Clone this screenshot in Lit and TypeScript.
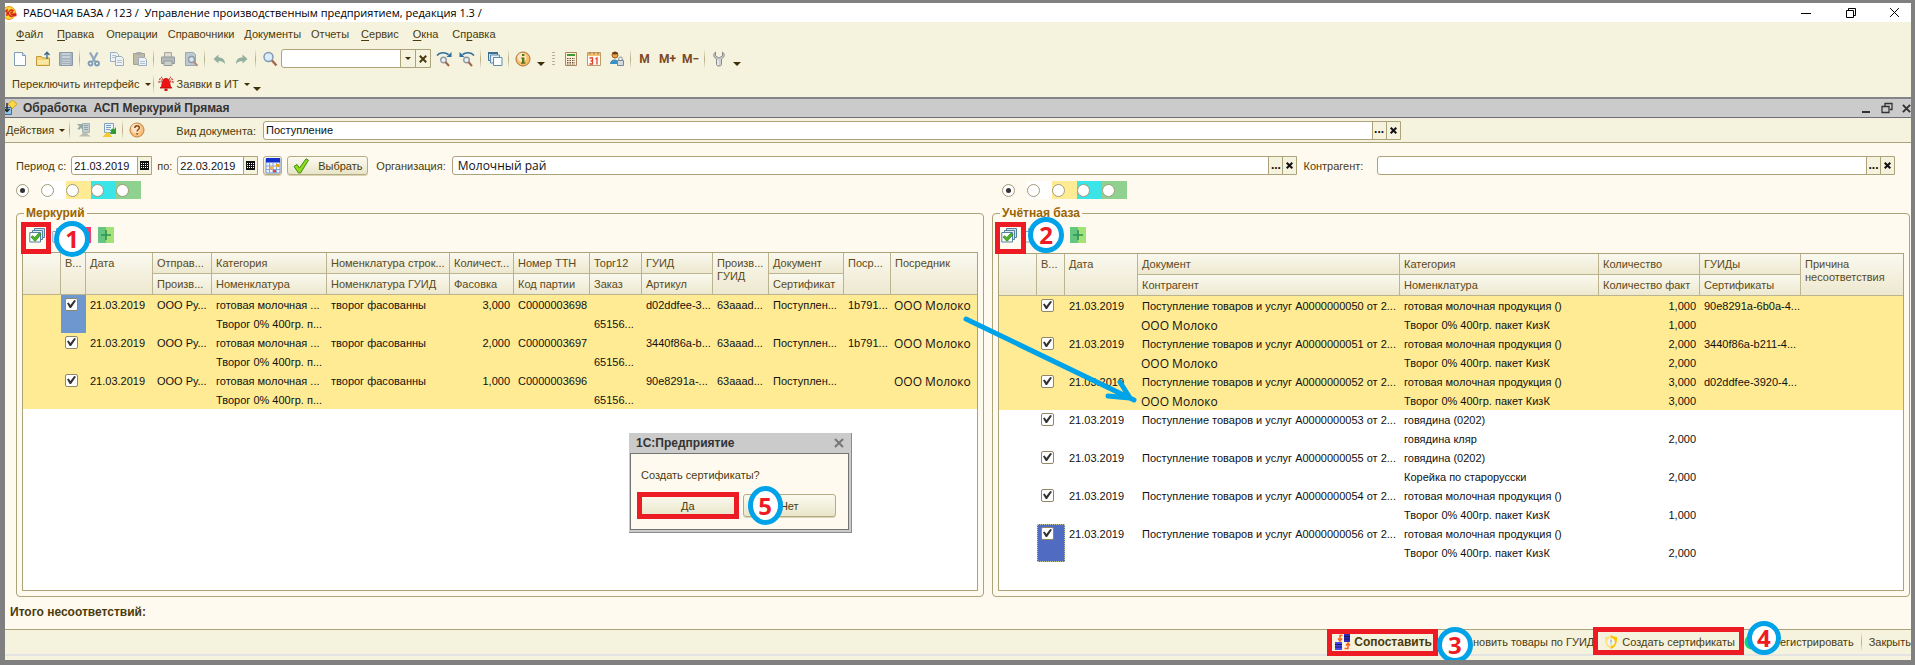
import { LitElement, html, svg, css, nothing } from "lit";
import { customElement, property } from "lit/decorators.js";
import { classMap } from "lit/directives/class-map.js";

const glyphs: Record<string, unknown> = {
  app: svg`<circle cx="8" cy="8" r="6.5" fill="#fbd23a" stroke="#e89a1c"/><path d="M4 6.500l2-1.500v6M12.500 6a3 3 0 1 0 0 4.500h3M12 7.500a1.200 1.200 0 1 0 0 1.500h3.500" fill="none" stroke="#d8231b" stroke-width="1.400"/>`,
  fresh: svg`<path d="M2.500 1.500h8l3 3v10h-11z" fill="#fbfdff" stroke="#7f9bb8"/><path d="M10.500 1.500v3h3" fill="#d5e3f1" stroke="#7f9bb8"/>`,
  open: svg`<path d="M1.500 5.500h5l1 1.500h7v7.500h-13z" fill="#f7d574" stroke="#c59a3a"/><path d="M2.500 9h11v4.500h-11z" fill="#fbe7a4"/><path d="M12 8V2M9.500 4L12 1.200 14.500 4" fill="none" stroke="#39688f" stroke-width="1.300"/>`,
  save: svg`<path d="M1.500 1.500h13v13h-13z" fill="#a9b6c2" stroke="#8c9aa7"/><path d="M4 2h8v5H4zM4 9h8v5H4z" fill="#c9d1d8"/><path d="M4 10.500h8M4 12.500h8M4 4.500h8" stroke="#a3afba"/>`,
  cut: svg`<path d="M4 1.500l5 9M11.500 1.500l-5 9" stroke="#8fa6bd" stroke-width="2.200"/><circle cx="4.500" cy="12.500" r="2" fill="none" stroke="#7e9ab5" stroke-width="1.800"/><circle cx="11" cy="12.500" r="2" fill="none" stroke="#7e9ab5" stroke-width="1.800"/>`,
  copy: svg`<path d="M1.500 1.500h6l2 2v7h-8z" fill="#eef2f4" stroke="#9aaec0"/><path d="M6.500 5.500h6l2 2v7h-8z" fill="#eef2f4" stroke="#9aaec0"/><path d="M3 4.500h4M3 6.500h3M8 9.500h5M8 11.500h5" stroke="#b2c1ce"/>`,
  paste: svg`<path d="M1.500 2.500h11v11h-11z" fill="#c0bba6" stroke="#a8a28c"/><path d="M4.500 1h5v3h-5z" fill="#a6adb1"/><path d="M6.500 6.500h6l2 2v6h-8z" fill="#eef2f4" stroke="#9aaec0"/><path d="M8 10.500h5M8 12.500h5" stroke="#b2c1ce"/>`,
  print: svg`<path d="M4.500 1.500h7v5h-7z" fill="#e0dcd2" stroke="#a7a69c"/><path d="M1.500 6h13v6.500h-13z" fill="#b4b8b8" stroke="#949a9b"/><path d="M4 10h8v4.500H4z" fill="#cbd0cd" stroke="#949a9b"/>`,
  preview: svg`<path d="M2.500 1.500h8l2 2v11h-10z" fill="#bec9d2" stroke="#9aa8b4"/><circle cx="8.500" cy="8.500" r="3" fill="#dce4ea" stroke="#8b9caa" stroke-width="1.400"/><path d="M10.800 11l3.700 3.700" stroke="#b58f78" stroke-width="2"/>`,
  undo: svg`<path d="M2.500 8l5-4.500v3c4 0 6.500 2 6.500 6.500-1.500-2-3.500-3-6.500-3v2.500z" fill="#93b09e"/>`,
  redo: svg`<path d="M13.500 8l-5-4.500v3c-4 0-6.500 2-6.500 6.500 1.500-2 3.500-3 6.500-3v2.500z" fill="#93b09e"/>`,
  find: svg`<circle cx="6.500" cy="6" r="4.500" fill="#d8ecfa" stroke="#7f98ae" stroke-width="1.400"/><path d="M10 9.500l4.500 5" stroke="#a4674b" stroke-width="2.400"/>`,
  next: svg`<path d="M1 4.500C4 1 9 1 12.500 3.500" fill="none" stroke="#2d6f9c" stroke-width="1.600"/><path d="M15.500 1v5h-5z" fill="#2d6f9c"/><circle cx="7.500" cy="9" r="2.800" fill="#e9f1f7" stroke="#8d99a3" stroke-width="1.400"/><path d="M9.500 11l3.500 4" stroke="#a4674b" stroke-width="2"/>`,
  prev: svg`<path d="M15 4.500C12 1 7 1 3.500 3.500" fill="none" stroke="#2d6f9c" stroke-width="1.600"/><path d="M.5 1v5h5z" fill="#2d6f9c"/><circle cx="7.500" cy="9" r="2.800" fill="#e9f1f7" stroke="#8d99a3" stroke-width="1.400"/><path d="M9.500 11l3.500 4" stroke="#a4674b" stroke-width="2"/>`,
  windows: svg`<path d="M1.500 1.500h9v8h-9z" fill="#cfe0ec" stroke="#3d6f95"/><path d="M1 2h10" stroke="#3d6f95" stroke-width="2"/><path d="M3.500 4h9v8h-9z" fill="#e4eef6" stroke="#5f8db0"/><path d="M6.500 6.500h8.500v8h-8.500z" fill="#fff" stroke="#5f8db0"/>`,
  info: svg`<circle cx="8" cy="8" r="7" fill="#fbbd66" stroke="#a8743f"/><circle cx="7" cy="6.500" r="4.500" fill="#fde5bd"/><path d="M7 3h2.400v2H7zM6.200 6.500h3.200v5h1v1.300H6v-1.300h1V7.800h-.8z" fill="#4c7a1e"/>`,
  calc: svg`<path d="M2.500 1.500h11v13h-11z" fill="#fcf1d8" stroke="#a98662"/><path d="M4 3h8v2H4z" fill="#3f9a33"/><path d="M4 7.500h8M4 9.500h8M4 11.500h8M4 13h8" stroke="#6b4c35" stroke-width="1.200" stroke-dasharray="1.500 1"/>`,
  calendar: svg`<path d="M1.500 1.500h13v13h-13z" fill="#fffdf5" stroke="#c09b69"/><path d="M2 2h12v3H2z" fill="#f3c274"/><path d="M4 1.500v2M8 1.500v2M12 1.500v2" stroke="#8c6130"/><path d="M3.500 7h3v6h-3M4.500 10h2M9.500 8l1.500-1v6.500" fill="none" stroke="#e4412b" stroke-width="1.300"/>`,
  user: svg`<circle cx="6" cy="4" r="3" fill="#e9a14a" stroke="#9a5a1c"/><path d="M3 3c0-3 6-3 6 0-2 .5-4 .5-6 0z" fill="#6b3d14"/><path d="M1 13c0-6 9-6 9 0z" fill="#3b8fc4"/><path d="M8.500 9.500h6v5h-6z" fill="#d2dbe2" stroke="#74899a"/><path d="M9.800 9V7.500c0-2 3.400-2 3.400 0V9" fill="none" stroke="#74899a"/>`,
  wrench: svg`<path d="M4.500 1v4l3.500 2 3.500-2V1c2.500 2 2.500 5-1 7v5.500c0 2-5 2-5 0V8c-3.500-2-3.500-5-1-7z" fill="#cfcfcf" stroke="#8b8b8b"/><path d="M7 9v5" stroke="#fff"/>`,
  bell: svg`<path d="M8 2.500c-4 0-3.500 5-4.500 8l-1.500 1.500h12l-1.500-1.500c-1-3-.5-8-4.500-8z" fill="#f31212" stroke="#a80b0b" stroke-width=".8"/><path d="M6.500 12.500h3v2.500h-3z" fill="#d01010"/><path d="M1 7c0-3 1-4.500 3-6M15 7c0-3-1-4.500-3-6M3 6.500c.3-2 .8-3 2-4M13 6.500c-.3-2-.8-3-2-4" fill="none" stroke="#c62d22" stroke-width="1.100" stroke-dasharray="2 1"/>`,
  doc: svg`<path d="M1.500 7.500h9v7h-9z" fill="#8fc3e6" stroke="#3a6f98"/><path d="M6 3v8M3.500 9L6 11.500 8.500 9" fill="none" stroke="#222" stroke-width="1.400"/><path d="M11.500 0l4.500 4.200-4.500 4.300L7 4.200z" fill="#fbd74c" stroke="#d7a017"/>`,
  formBack: svg`<path d="M6.500 1.500h7v9h-7z" fill="#c3cdd0" stroke="#a3b2b6"/><path d="M8 3.500h4M8 5.500h4M8 7.500h4" stroke="#94a5aa"/><path d="M1 2h6v6L5 6 3 8 1.500 6.500 3.500 4.500z" fill="#95aaa9"/><path d="M3 14.500l6-5 5.500 5z" fill="#b9bcae"/>`,
  formNext: svg`<path d="M3.500 1.500h9v9h-9z" fill="#e8f2fa" stroke="#7fa3be"/><path d="M5 3.500h5M5 5.500h5M5 7.500h4" stroke="#7fa3be"/><path d="M15 5v7H8.500l2-2-1.500-1.500 2.500-2 1.500 1z" fill="#2e9b2e"/><path d="M1.500 15l5-5.500 5 5.500z" fill="#f6c832"/>`,
  help: svg`<circle cx="8" cy="8" r="7" fill="#fac17a" stroke="#c08046"/><circle cx="7" cy="6.500" r="4.800" fill="#fde3c0"/><path d="M5.800 6c0-3 4.600-3 4.600 0 0 1.600-2.300 1.500-2.300 3.600M8.100 11v1.600" fill="none" stroke="#8b4a1c" stroke-width="1.500"/>`,
  monthGrid: svg`<path d="M1 1h14v14H1z" fill="#eef4ff" stroke="#7a94cc"/><path d="M1 0h14v4.500H1z" fill="#1331c8"/><path d="M1 8h14M1 11.500h14M4.500 5v10M8 5v10M11.500 5v10" stroke="#8aa4da"/><path d="M5 8.500h3v3H5z" fill="#f2b04b"/><path d="M11 6h3v3h-3z" fill="#e8a52e"/><path d="M8 12h3v2.500H8z" fill="#d44"/>`,
  tick: svg`<path d="M1 8.500l3-2 2.500 3.500L13 .8l2.500 1.400L7.500 15h-2z" fill="#8edb1e" stroke="#3e8d12"/>`,
  marks: svg`<path d="M5.500 1.500h10v9h-10z" fill="#cfdfeb" stroke="#52809f"/><path d="M3.500 3.500h10v9h-10z" fill="#dfeaf3" stroke="#52809f"/><path d="M.8 5.500h10.700v9.500H.8z" fill="#fff" stroke="#52809f"/><path d="M2 10l2-1.300 1.500 2L10 6l2 1.500L6.500 14h-1z" fill="#4cb52b" stroke="#2e8418" stroke-width=".7"/>`,
  unmark: svg`<path d="M4.500 1.500h10v10h-10z" fill="#eef4f9" stroke="#7fa3be"/><path d="M.8 4.500h10.700v10.500H.8z" fill="#fff" stroke="#7fa3be"/>`,
  pink: svg`<path d="M0 0h16v16H0z" fill="#ff3b6b"/>`,
  minus: svg`<path d="M3 8h10" stroke="#ff3b6b" stroke-width="2"/>`,
  plus: svg`<path d="M0 0h8v16H0z" fill="#65c581"/><path d="M8 0h8v16H8z" fill="#a3e276"/><path d="M8 3v10M3 8h10" stroke="#2f9352" stroke-width="1.600"/>`,
  swap: svg`<path d="M9 0h6v8H9z" fill="#2b2bb0"/><path d="M0 8h7v8H0z" fill="#4a4af0"/><path d="M9 2.500h6M9 5h6M0 10.500h7M0 13h7" stroke="#15156a"/><path d="M7.500 1.500H5v5M3 4.500L5 7l2-2.500M9.500 14.500H13v-5M11 11.500L13 9l2 2.500" fill="none" stroke="#f9621c" stroke-width="1.500"/>`,
  shield: svg`<path d="M8 1c2 1.500 4 2 6 2 0 6-1 9.500-6 12-5-2.500-6-6-6-12 2 0 4-.5 6-2z" fill="#ffe27a"/><path d="M8 1c2 1.500 4 2 6 2 0 6-1 9.500-6 12z" fill="#fcc400"/><circle cx="8" cy="8" r="3.800" fill="#f4f6f4"/><path d="M8 5.500v3M8 9.500v1" stroke="#8fa8b5" stroke-width="1.300"/>`,
  ok: svg`<circle cx="8" cy="8" r="7.500" fill="#0bd67a"/>`,
};

const icon = (name: string) =>
  html`<svg width="16" height="16" viewBox="0 0 16 16" aria-hidden="true">${glyphs[name]}</svg>`;

const shared = css`
  * { box-sizing: border-box; }
  button {
    font: inherit; color: inherit; background: none; border: 0; padding: 0; margin: 0;
    display: inline-flex; align-items: center; justify-content: center; white-space: nowrap;
  }
  input { font: inherit; margin: 0; min-width: 0; }
  svg { display: block; flex: none; }
  .mark { position: absolute; border: 5px solid #ed1c24; pointer-events: none; }
  .badge {
    position: absolute; width: 36px; height: 36px; border: 5px solid #00a2e8; border-radius: 50%;
    background: #fff; color: #ed1c24; font: 700 24px/26px "Open Sans", sans-serif; text-align: center;
    pointer-events: none; z-index: 2;
  }
`;

interface Col { w?: number; top: string; bottom?: string; key: string; tall?: boolean; num?: boolean }
interface Rec { hit: boolean; current?: boolean; a: Record<string, string>; b: Record<string, string> }

@customElement("record-grid")
class RecordGrid extends LitElement {
  @property({ attribute: false }) cols: Col[] = [];
  @property({ attribute: false }) rows: Rec[] = [];
  @property() tone = "soft";

  static styles = [shared, css`
    :host { display: block; flex: 1; border: 1px solid #aca37b; background: #fff; overflow: hidden; }
    table { width: 100%; border-collapse: separate; border-spacing: 0; table-layout: fixed; }
    th, td { padding: 0; text-align: left; vertical-align: top; font-weight: 400; white-space: nowrap; overflow: hidden; }
    th {
      height: 21px; padding: 0 0 0 4px; line-height: 20px; color: #5b4a1a;
      background: linear-gradient(#faf9ef, #ede8cf);
      border-right: 1px solid #bcb48f; border-bottom: 1px solid #bcb48f;
    }
    th.last { border-right: 0; }
    th.tall { line-height: 13px; padding-top: 4px; white-space: pre-line; }
    td { height: 19px; line-height: 17px; padding: 2px 0 0 4px; color: #111; }
    td.num { text-align: right; padding-right: 4px; }
    td.wide { font: 12px/17px "Open Sans", sans-serif; padding-left: 3px; }
    .hit td { background: #ffeb93; }
    td.pick { padding: 3px 0 0 4px; }
    .hit td.soft { background: #6f97cf; }
    td.deep { background: #4f6bc2; outline: 1px dotted #c3c99a; outline-offset: -1px; }
    input {
      appearance: none; display: block; width: 13px; height: 13px; background: #fff;
      border: 1px solid #8f8765; border-radius: 2px;
    }
    input:checked::before {
      content: ""; display: block; width: 9px; height: 9px; margin: 1px; background: #333;
      clip-path: polygon(0 35%, 18% 28%, 38% 55%, 80% 0, 100% 8%, 45% 90%, 30% 90%);
    }
  `];

  private cell(c: Col, r: Rec, line: "a" | "b") {
    if (c.key === "pick") {
      return line === "b" ? nothing : html`<td rowspan="2" class=${classMap({ pick: true, [this.tone]: !!r.current })}>
        <input type="checkbox" aria-label="Выбрать строку" checked /></td>`;
    }
    const text = r[line][c.key] ?? "";
    return html`<td class=${classMap({ num: !!c.num, wide: text === "ООО Молоко" })}>${text}</td>`;
  }

  render() {
    const last = this.cols.length - 1;
    return html`<table>
      <colgroup>${this.cols.map((c) => html`<col style=${c.w ? `width:${c.w}px` : ""} />`)}</colgroup>
      <thead>
        <tr>${this.cols.map((c, i) => html`<th rowspan=${c.bottom ? 1 : 2}
          class=${classMap({ tall: !!c.tall, last: i === last })}>${c.top}</th>`)}</tr>
        <tr>${this.cols.filter((c) => c.bottom).map((c) => html`<th>${c.bottom}</th>`)}</tr>
      </thead>
      <tbody>${this.rows.map((r) => html`
        <tr class=${classMap({ hit: r.hit })}>${this.cols.map((c) => this.cell(c, r, "a"))}</tr>
        <tr class=${classMap({ hit: r.hit })}>${this.cols.map((c) => this.cell(c, r, "b"))}</tr>`)}
      </tbody>
    </table>`;
  }
}

const leftCols: Col[] = [
  { w: 38, top: "", key: "none" },
  { w: 25, top: "В...", key: "pick" },
  { w: 67, top: "Дата", key: "date" },
  { w: 59, top: "Отправ...", bottom: "Произв...", key: "from" },
  { w: 115, top: "Категория", bottom: "Номенклатура", key: "cat" },
  { w: 123, top: "Номенклатура строк...", bottom: "Номенклатура ГУИД", key: "nom" },
  { w: 64, top: "Количест...", bottom: "Фасовка", key: "qty", num: true },
  { w: 76, top: "Номер ТТН", bottom: "Код партии", key: "ttn" },
  { w: 52, top: "Торг12", bottom: "Заказ", key: "order" },
  { w: 71, top: "ГУИД", bottom: "Артикул", key: "guid" },
  { w: 56, top: "Произв...\n ГУИД", key: "maker", tall: true },
  { w: 75, top: "Документ", bottom: "Сертификат", key: "doc" },
  { w: 47, top: "Поср...", key: "mid" },
  { top: "Посредник", key: "agent" },
];

const leftRow = (qty: string, ttn: string, guid: string, mid: string, current = false): Rec => ({
  hit: true, current,
  a: { date: "21.03.2019", from: "ООО Ру...", cat: "готовая молочная ...", nom: "творог фасованны", qty, ttn, guid,
    maker: "63aaad...", doc: "Поступлен...", mid, agent: "ООО Молоко" },
  b: { cat: "Творог 0% 400гр. п...", order: "65156..." },
});

const leftRows = [
  leftRow("3,000", "С0000003698", "d02ddfee-3...", "1b791...", true),
  leftRow("2,000", "С0000003697", "3440f86a-b...", "1b791..."),
  leftRow("1,000", "С0000003696", "90e8291a-...", ""),
];

const rightCols: Col[] = [
  { w: 38, top: "", key: "none" },
  { w: 28, top: "В...", key: "pick" },
  { w: 73, top: "Дата", key: "date" },
  { w: 262, top: "Документ", bottom: "Контрагент", key: "doc" },
  { w: 199, top: "Категория", bottom: "Номенклатура", key: "cat" },
  { w: 101, top: "Количество", bottom: "Количество факт", key: "qty", num: true },
  { w: 101, top: "ГУИДы", bottom: "Сертификаты", key: "guid" },
  { top: "Причина\nнесоответствия", key: "why", tall: true },
];

const rightRow = (no: string, hit: boolean, cat: string, item: string, qty: string, fact: string, guid = "", current = false): Rec => ({
  hit, current,
  a: { date: "21.03.2019", doc: `Поступление товаров и услуг А00000000${no} от 2...`, cat, qty, guid },
  b: { doc: hit ? "ООО Молоко" : "", cat: item, qty: fact },
});

const milk = "готовая молочная продукция ()";
const curd = "Творог 0% 400гр. пакет КизК";
const rightRows = [
  rightRow("50", true, milk, curd, "1,000", "1,000", "90e8291a-6b0a-4..."),
  rightRow("51", true, milk, curd, "2,000", "2,000", "3440f86a-b211-4..."),
  rightRow("52", true, milk, curd, "3,000", "3,000", "d02ddfee-3920-4..."),
  rightRow("53", false, "говядина (0202)", "говядина кляр", "", "2,000"),
  rightRow("55", false, "говядина (0202)", "Корейка по старорусски", "", "2,000"),
  rightRow("54", false, milk, curd, "", "1,000"),
  rightRow("56", false, milk, curd, "", "2,000", "", true),
];

const menu: [string, string, string][] = [
  ["", "Ф", "айл"], ["", "П", "равка"], ["Операции", "", ""], ["Справочники", "", ""], ["Документы", "", ""],
  ["Отчеты", "", ""], ["", "С", "ервис"], ["", "О", "кна"], ["Сп", "р", "авка"],
];

@customElement("app-root")
class AppRoot extends LitElement {
  static styles = [shared, css`
    :host {
      display: block; color: #4b3b0c; font: 11px/14px "Liberation Sans", Arial, sans-serif;
    }
    .frame {
      position: relative; display: flex; flex-direction: column; min-height: 100vh; overflow: hidden;
      border: solid #808080; border-width: 3px 4px 5px 5px; background: #f5f2de;
    }
    .title {
      display: flex; align-items: center; height: 19px; background: #fff; color: #000;
      font: 11px/16px "Open Sans", sans-serif; white-space: pre; gap: 6px;
    }
    .title > svg, .doctitle > svg { margin-left: -4px; }
    .title .caps { display: flex; margin-left: auto; gap: 28px; padding-right: 11px; }
    .menu { display: flex; height: 24px; align-items: center; padding-left: 9px; gap: 10px; }
    .menu .key { padding: 0 2px; }
    .menu u { text-underline-offset: 2px; }
    .bar { display: flex; height: 25px; align-items: center; padding-left: 3px; }
    .bar.second { height: 26px; padding-left: 7px; }
    .bar .tool { width: 23px; height: 22px; }
    .bar .bell { width: 21px; }
    .tool.memo { font: 700 12px/14px Roboto, sans-serif; color: #7b4a26; }
    .sep { width: 1px; height: 20px; margin: 0 2px; background: linear-gradient(#f5f2de, #b5ac85, #f5f2de); flex: none; }
    .more { width: 14px; height: 22px; padding-top: 10px; }
    .more::after, .drop::after {
      content: ""; border: 4px solid transparent; border-top-color: #3e2f08; border-bottom: 0;
    }
    .drop { gap: 5px; }
    .drop::after { border-width: 3px 3px 0; }
    .grip { width: 3px; height: 14px; margin: 0 4px; background: repeating-linear-gradient(#b9b18c 0 1px, transparent 1px 3px); }
    .field { display: flex; height: 19px; border: 1px solid #aca37b; border-radius: 3px 0 0 3px; background: #fff; min-width: 0; overflow: hidden; }
    .field input { flex: 1; border: 0; background: none; padding: 0 2px; outline: 0; color: #111; }
    .field button { width: 14px; border-left: 1px solid #aca37b; background: #f5f2de; color: #111; flex: none; }
    .field .dots { font: 700 12px/14px "Liberation Sans", sans-serif; padding-bottom: 2px; }
    .search { width: 150px; margin-right: 1px; }
    .search button { width: 15px; }
    .doctitle {
      display: flex; align-items: center; height: 21px;
      background: #cbcbcb; border-top: 2px solid #85838a; border-bottom: 1px solid #6f6d78;
      color: #333; font-weight: 700; font-size: 12px; white-space: pre; gap: 6px;
    }
    .doctitle .caps { display: flex; margin-left: auto; gap: 9px; }
    .form { display: flex; height: 25px; align-items: center; border-bottom: 1px solid #aca37b; }
    .form .drop { margin-right: 3px; }
    .form .sep { margin: 0 1px; }
    .form .tool { width: 25px; }
    .form label { margin: 2px 7px 0 auto; white-space: nowrap; }
    .lead { display: flex; align-items: center; width: 258px; flex: none; padding-left: 1px; }
    .grow { flex: 1137; }
    .rest { flex: 511; }
    .body { display: flex; flex-direction: column; flex: 1; background: #fffaf0; padding-top: 13px; }
    .filter { display: flex; align-items: center; padding: 0 16px 0 11px; white-space: nowrap; }
    .filter .date { width: 81px; margin: 0 5px; }
    .filter .org { flex: 846; margin: 0 6px; font-family: "Open Sans", sans-serif; font-size: 12px; }
    .filter .org input { padding-left: 5px; }
    .filter .agent { flex: 517; margin-left: 14px; }
    .push {
      height: 19px; border: 1px solid #b5ac85; border-radius: 3px; background: linear-gradient(#fbfaf0, #e9e5c9);
      box-shadow: 0 1px 0 #d9d3b3;
    }
    .cal { width: 19px; }
    .choose { width: 81px; margin: 0 8px 0 5px; gap: 9px; }
    .panes { display: flex; flex: 1; gap: 8px; padding: 6px 1px 0 11px; }
    .pane { display: flex; flex-direction: column; min-width: 0; }
    .pane.a { flex: 968; }
    .pane.b { flex: 918; }
    .radios { display: flex; height: 18px; }
    .b .radios { padding-left: 10px; }
    .radios label { display: flex; align-items: center; width: 25px; }
    .radios .c1 { background: #fff; }
    .radios .c2 { background: #ffeb93; }
    .radios .c3 { background: #3be4e6; }
    .radios .c4 { background: #8fd18f; }
    .radios input {
      appearance: none; width: 13px; height: 13px; border: 1px solid #a29a78; border-radius: 50%; background: #fff;
      display: flex; align-items: center; justify-content: center;
    }
    .radios input:checked::before { content: ""; width: 5px; height: 5px; border-radius: 50%; background: #333; }
    fieldset {
      display: flex; flex-direction: column; flex: 1; min-width: 0; margin: 7px 0 0; padding: 0 5px 5px;
      border: 1px solid #aca37b; border-radius: 4px;
    }
    legend { margin-left: 2px; padding: 0 2px; color: #9a6400; font-weight: 700; font-size: 12px; line-height: 14px; }
    .marks { position: relative; display: flex; gap: 7px; padding: 7px 0 9px 7px; }
    .b .marks { padding: 7px 0 10px 3px; }
    .marks .mark { left: -1px; top: 2px; width: 30px; height: 32px; }
    .b .marks .mark { left: -3px; width: 31px; }
    .marks .badge { left: 32px; top: 1px; }
    .b .marks .badge { left: 30px; top: -3px; }
    .total { height: 32px; padding: 8px 5px; font-weight: 700; font-size: 12px; }
    .foot {
      display: flex; justify-content: flex-end; align-items: center; height: 25px;
      border-top: 1px solid #aca37b; white-space: nowrap; flex: none;
    }
    .foot button { position: relative; height: 24px; gap: 3px; }
    .foot .match { font-weight: 700; margin-right: 41px; font-size: 12px; }
    .foot .make { margin: 0 9px; }
    .foot .reg { gap: 20px; }
    .foot .sep { margin: 0 7px; }
    .match .mark { left: -8px; right: -6px; top: -1px; height: 27px; }
    .match .badge { right: -41px; top: -3px; }
    .make .mark { left: -10px; right: -9px; top: -3px; height: 28px; }
    .reg .badge { left: 3px; top: -9px; width: 34px; height: 34px; line-height: 24px; }
    .status { height: 6px; border-top: 2px solid #e4e4e4; flex: none; }
    .dialog {
      position: absolute; left: 624px; top: 430px; width: 223px; display: flex; flex-direction: column;
      background: #cbcbcb; border-right: 1px solid #8b8b8b; border-bottom: 1px solid #8b8b8b; padding: 0 2px 2px 1px;
    }
    .dialog header {
      display: flex; justify-content: space-between; align-items: center; height: 20px; padding: 0 5px 0 6px;
      font-weight: 700; font-size: 12px; color: #333;
    }
    .inner { border: 1px solid #747474; background: #fffaf0; padding: 14px 12px 12px 10px; }
    .inner p { margin: 0 0 12px; }
    .answers { display: flex; gap: 8px; }
    .answers .push { position: relative; width: 94px; height: 23px; }
    .answers .mark { left: -5px; right: -5px; top: -3px; bottom: -3px; }
    .answers .badge { left: 4px; top: -9px; width: 35px; height: 39px; line-height: 29px; }
    .arrow { position: absolute; left: 955px; top: 310px; pointer-events: none; }
  `];

  private field(id: string, cls: string, value: string) {
    return html`<div class="field ${cls}">
      <input id=${id} .value=${value} />
      <button class="dots" aria-label="Выбрать из списка">...</button>
      <button aria-label="Очистить">${this.cross(7)}</button>
    </div>`;
  }

  private cross(size: number, width = 2, color = "currentColor") {
    return html`<svg width=${size} height=${size} viewBox="0 0 10 10" aria-hidden="true">
      <path d="M1 1l8 8M9 1L1 9" stroke=${color} stroke-width=${(width * 10) / size} /></svg>`;
  }

  private date(id: string, value: string) {
    return html`<div class="field date"><input id=${id} .value=${value} />
      <button aria-label="Календарь"><svg width="9" height="9" viewBox="0 0 9 9">
        <path d="M0 0h9v9H0z" fill="#111" />
        <path d="M1 2.500h7M1 4.500h7M1 6.500h7" stroke="#fff" stroke-dasharray="1 1" /></svg></button></div>`;
  }

  private tools(names: string[]) {
    return names.map((n) => n === "|" ? html`<span class="sep"></span>`
      : html`<button class="tool" aria-label=${n}>${icon(n)}</button>`);
  }

  private pane(side: string, name: string, step: string, icons: string[], cols: Col[], rows: Rec[]) {
    return html`<section class="pane ${side}">
      <div class="radios" role="radiogroup" aria-label="Отбор">${[0, 1, 2, 3, 4].map((i) => html`
        <label class="c${i}"><input type="radio" name="filter-${side}" aria-label="Отбор ${i}" ?checked=${i === 0} /></label>`)}
      </div>
      <fieldset>
        <legend>${name}</legend>
        <div class="marks">
          ${icons.map((n) => html`<button aria-label=${n}>${icon(n)}</button>`)}
          <span class="mark"></span><span class="badge">${step}</span>
        </div>
        <record-grid .cols=${cols} .rows=${rows} tone=${side === "a" ? "soft" : "deep"}></record-grid>
      </fieldset>
    </section>`;
  }

  render() {
    return html`<div class="frame">
      <div class="title">${icon("app")}<span>РАБОЧАЯ БАЗА / 123 /  Управление производственным предприятием, редакция 1.3 /</span>
        <div class="caps">
          <button aria-label="Свернуть"><svg width="16" height="12"><path d="M0 6.500h10" stroke="#000" /></svg></button>
          <button aria-label="Развернуть"><svg width="16" height="12"><path d="M1.500 3.500h7v7h-7zM3.500 3V1.500h7v7H9" fill="none" stroke="#000" /></svg></button>
          <button aria-label="Закрыть">${this.cross(11, 1)}</button>
        </div>
      </div>
      <nav class="menu">${menu.map(([a, u, b]) => html`<button class=${classMap({ key: !!u })}><span>${a}<u>${u}</u>${b}</span></button>`)}</nav>
      <div class="bar">
        ${this.tools(["fresh", "open", "save", "|", "cut", "copy", "paste", "|", "print", "preview", "|", "undo", "redo", "|", "find"])}
        <div class="field search"><input aria-label="Поиск" /><button class="drop" aria-label="Список"></button>
          <button aria-label="Очистить">${this.cross(8, 2, "#4b3b0c")}</button></div>
        ${this.tools(["next", "prev", "|", "windows", "|", "info"])}
        <button class="more" aria-label="Ещё"></button><span class="grip"></span>
        ${this.tools(["calc", "calendar", "user", "|"])}
        ${["M", "M+", "M−"].map((m) => html`<button class="tool memo">${m}</button>`)}
        ${this.tools(["|", "wrench"])}
        <button class="more" aria-label="Ещё"></button>
      </div>
      <div class="bar second">
        <button class="drop">Переключить интерфейс</button><span class="sep"></span>
        <button class="tool bell" aria-label="Звонок">${icon("bell")}</button>
        <button class="drop">Заявки в ИТ</button><button class="more" aria-label="Ещё"></button>
      </div>
      <div class="doctitle">${icon("doc")}<span>Обработка  АСП Меркурий Прямая</span>
        <div class="caps">
          <button aria-label="Свернуть"><svg width="12" height="12"><path d="M2 10h8" stroke="#333" stroke-width="2" /></svg></button>
          <button aria-label="Восстановить"><svg width="12" height="12"><path d="M1 4.500h7v6H1zM4 4V1.500h7v6H9" fill="none" stroke="#333" stroke-width="1.300" /></svg></button>
          <button aria-label="Закрыть">${this.cross(9, 2)}</button>
        </div>
      </div>
      <div class="form">
        <div class="lead">
          <button class="drop">Действия</button><span class="sep"></span>
          ${this.tools(["formBack", "formNext", "|", "help"])}
          <label for="kind">Вид документа:</label>
        </div>
        ${this.field("kind", "grow", "Поступление")}
        <span class="rest"></span>
      </div>
      <main class="body">
        <div class="filter">
          <label for="from">Период с:</label>${this.date("from", "21.03.2019")}
          <label for="to">по:</label>${this.date("to", "22.03.2019")}
          <button class="push cal" aria-label="Период">${icon("monthGrid")}</button>
          <button class="push choose">${icon("tick")}Выбрать</button>
          <label for="org">Организация:</label>${this.field("org", "org", "Молочный рай")}
          <label for="agent">Контрагент:</label>${this.field("agent", "agent", "")}
        </div>
        <div class="panes">
          ${this.pane("a", "Меркурий", "1", ["marks", "unmark", "pink", "plus"], leftCols, leftRows)}
          ${this.pane("b", "Учётная база", "2", ["marks", "unmark", "minus", "plus"], rightCols, rightRows)}
        </div>
        <div class="total">Итого несоответствий:</div>
      </main>
      <footer class="foot">
        <button class="match">${icon("swap")}Сопоставить<span class="mark"></span><span class="badge">3</span></button>
        <button>новить товары по ГУИД</button>
        <button class="make">${icon("shield")}Создать сертификаты<span class="mark"></span></button>
        <button class="reg">${icon("ok")}егистрировать<span class="badge">4</span></button>
        <span class="sep"></span>
        <button>Закрыть</button>
      </footer>
      <div class="status"></div>
      <svg class="arrow" width="180" height="95" viewBox="0 0 180 95" aria-hidden="true">
        <path d="M6 6L174 87M160 69l10 16-22-2" fill="none" stroke="#00a2e8" stroke-width="5" stroke-linecap="round" />
      </svg>
      <div class="dialog" role="dialog" aria-label="1С:Предприятие">
        <header><span>1С:Предприятие</span><button aria-label="Закрыть">${this.cross(10, 2, "#777")}</button></header>
        <div class="inner">
          <p>Создать сертификаты?</p>
          <div class="answers">
            <button class="push">Да<span class="mark"></span></button>
            <button class="push">Нет<span class="badge">5</span></button>
          </div>
        </div>
      </div>
    </div>`;
  }
}
